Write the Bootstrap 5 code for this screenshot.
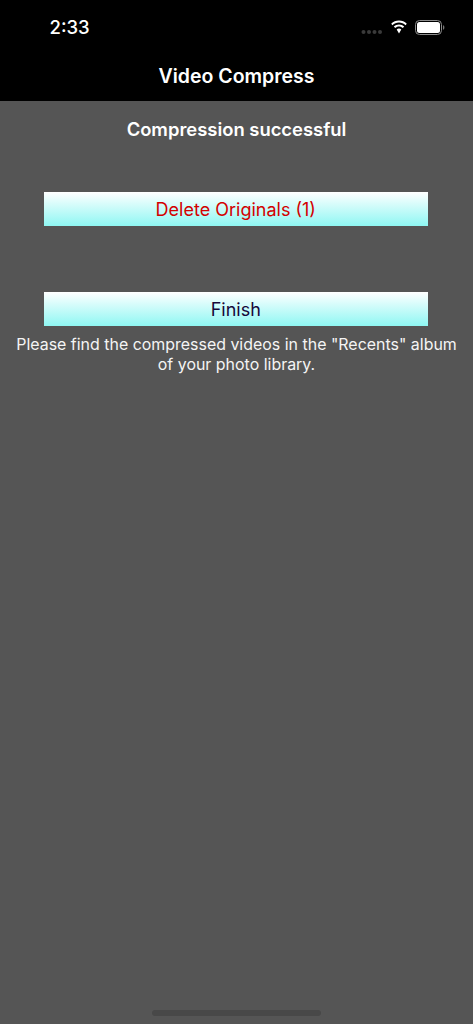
<!DOCTYPE html>
<html lang="en">
<head>
<meta charset="utf-8">
<meta name="viewport" content="width=device-width, initial-scale=1">
<title>Video Compress</title>
<link rel="stylesheet" href="https://cdn.jsdelivr.net/npm/bootstrap@5.3.0/dist/css/bootstrap.min.css">
<style>
html,body{height:100%;}
body{background:#555;font-family:Inter,"Liberation Sans",sans-serif;color:#fff;}
.app-screen{height:1024px;overflow:hidden;}
.top-bar{background:#000;height:101px;}
.status-row{height:54px;padding:0 28px 0 49.500px;}
.clock{font-size:18.500px;font-weight:500;line-height:54px;}
.status-icons{gap:7px;}
.signal-dots{margin-top:10px;}
.app-title{font-size:19.500px;font-weight:600;line-height:24px;margin-top:10px;}
.result-title{font-size:18.400px;font-weight:600;line-height:24px;margin-top:16px;margin-bottom:51px;margin-left:0;}
.grad-btn{display:block;width:383.500px;height:34px;margin:0 0 0 44px;padding:1px 0 0;border:0;border-radius:0;background:linear-gradient(#fff,#8ff7f3);font-size:18px;line-height:33px;text-align:center;}
.grad-btn.danger-text,.grad-btn.danger-text:hover{color:#d40000;}
.grad-btn.dark-text,.grad-btn.dark-text:hover{color:#16083a;}
.gap-block{height:66px;}
.hint{font-size:15.950px;line-height:20px;margin-top:8.500px;padding:0 10px;text-align:center;color:#f4f4f4;}
.home-bar{left:152px;bottom:8px;width:169px;height:6px;border-radius:3px;background:#484848;}
</style>
</head>
<body>
<div class="app-screen position-relative">
  <header class="top-bar text-center">
    <div class="status-row d-flex justify-content-between align-items-center">
      <span class="clock">2:33</span>
      <div class="status-icons d-flex align-items-center">
        <svg class="signal-dots" width="22" height="6" viewBox="0 0 22 6"><g fill="#3a3a3a"><circle cx="2.500" cy="3" r="2"/><circle cx="8" cy="3" r="2"/><circle cx="13.500" cy="3" r="2"/><circle cx="19" cy="3" r="2"/></g></svg>
        <svg width="18" height="14" viewBox="0 0 18 14"><path d="M9 2.600c2.500 0 4.800 1 6.500 2.600l1.300-1.400C14.700 1.800 12 .6 9 .6S3.300 1.800 1.200 3.800l1.300 1.400C4.200 3.600 6.500 2.600 9 2.600zM9 6.500c1.500 0 2.800.6 3.800 1.500l1.400-1.400C12.800 5.300 11 4.500 9 4.500S5.200 5.300 3.800 6.600L5.200 8c1-.9 2.300-1.500 3.800-1.500zM9 8.500c-.9 0-1.700.3-2.300.9L9 13.500l2.300-4.100c-.6-.6-1.400-.9-2.300-.9z" fill="#fff"/></svg>
        <svg width="30" height="15" viewBox="0 0 30 15"><rect x=".5" y=".5" width="26" height="14" rx="4" fill="none" stroke="#8c8c8c"/><rect x="2" y="2" width="23" height="11" rx="2.500" fill="#fff"/><path d="M28 5.200c.9.3 1.400 1.200 1.400 2.300s-.5 2-1.400 2.300z" fill="#777"/></svg>
      </div>
    </div>
    <div class="app-title">Video Compress</div>
  </header>
  <main class="text-center">
    <div class="result-title">Compression successful</div>
    <button type="button" class="btn grad-btn danger-text">Delete Originals (1)</button>
    <div class="gap-block"></div>
    <button type="button" class="btn grad-btn dark-text">Finish</button>
    <p class="hint mb-0">Please find the compressed videos in the "Recents" album of your photo library.</p>
  </main>
  <div class="home-bar position-absolute"></div>
</div>
<script src="https://cdn.jsdelivr.net/npm/bootstrap@5.3.0/dist/js/bootstrap.bundle.min.js"></script>
</body>
</html>
